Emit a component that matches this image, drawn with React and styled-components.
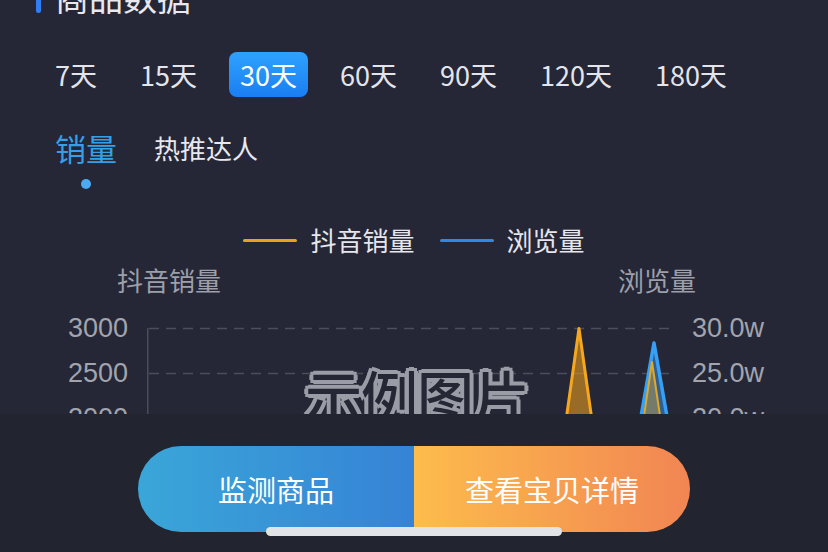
import React from "react";
import styled, { createGlobalStyle } from "styled-components";

const Global = createGlobalStyle`
  html, body { margin: 0; padding: 0; background: #252736; }
  body { font-family: "Noto Sans CJK SC", "Noto Sans", sans-serif; }
  * { box-sizing: border-box; }
`;

const Page = styled.div`
  width: 828px;
  height: 552px;
  display: flex;
  flex-direction: column;
  background: #252736;
  position: relative;
  overflow: hidden;
`;

const Content = styled.div`
  height: 414px;
  overflow: hidden;
  display: flex;
  flex-direction: column;
`;

const TitleRow = styled.div`
  margin-top: -23px;
  height: 40px;
  padding-left: 36px;
  display: flex;
  align-items: center;
  gap: 14px;
`;

const TitleBar = styled.span`
  width: 5px;
  height: 32px;
  border-radius: 3px;
  background: #2f7ef6;
`;

const Title = styled.span`
  font-size: 34px;
  line-height: 40px;
  color: #e8e8ee;
`;

const Periods = styled.div`
  margin-top: 35px;
  padding-left: 44px;
  display: flex;
  gap: 21px;
`;

const Period = styled.div`
  height: 45px;
  padding: 0 11px;
  font-size: 27px;
  line-height: 45px;
  border-radius: 8px;
  color: ${(p) => (p.$active ? "#ffffff" : "#e4e5ea")};
  background: ${(p) =>
    p.$active ? "linear-gradient(180deg, #2ea2ff 0%, #1a7ef2 100%)" : "transparent"};
`;

const SubTabs = styled.div`
  margin-top: 31px;
  padding-left: 55px;
  display: flex;
  gap: 37px;
  align-items: flex-start;
`;

const SubTab = styled.div`
  display: flex;
  flex-direction: column;
  align-items: center;
  gap: 11px;
`;

const SubTabLabel = styled.span`
  height: 40px;
  line-height: 40px;
  font-size: ${(p) => (p.$active ? "31px" : "26px")};
  color: ${(p) => (p.$active ? "#33a0e8" : "#e8e8ee")};
`;

const Dot = styled.span`
  width: 10px;
  height: 10px;
  border-radius: 50%;
  background: #4aaaf2;
`;

const Legend = styled.div`
  margin-top: 33px;
  height: 36px;
  display: flex;
  justify-content: center;
  gap: 25px;
`;

const LegendItem = styled.div`
  display: flex;
  align-items: center;
  gap: 13px;
  font-size: 26px;
  line-height: 36px;
  color: #e6e6ec;
`;

const LegendLine = styled.span`
  width: 54px;
  height: 3px;
  border-radius: 2px;
  background: ${(p) => p.$color};
`;

const AxisNames = styled.div`
  margin-top: 5px;
  height: 34px;
  display: flex;
  justify-content: space-between;
  padding: 0 132px 0 117px;
  font-size: 26px;
  line-height: 34px;
  color: #9d9fa9;
`;

const Chart = styled.div`
  margin-top: 9px;
  position: relative;
  display: flex;
`;

const AxisCol = styled.div`
  width: ${(p) => p.$w}px;
  display: flex;
  flex-direction: column;
  text-align: ${(p) => p.$align};
  font-size: 27px;
  line-height: 45px;
  color: #a2a4ae;
  font-family: "Liberation Sans", "Noto Sans CJK SC", sans-serif;
`;

const Plot = styled.svg`
  display: block;
  margin: 0 20px 0 19px;
  flex: none;
`;

const Watermark = styled.div`
  position: absolute;
  left: 305px;
  top: 60px;
  font-size: 57px;
  line-height: 1;
  font-weight: 500;
  letter-spacing: -1px;
  color: #252735;
  text-shadow: 4px 0 0 #9a9ca6, -4px 0 0 #9a9ca6, 0 4px 0 #9a9ca6, 0 -4px 0 #9a9ca6,
    3px 3px 0 #9a9ca6, -3px -3px 0 #9a9ca6, 3px -3px 0 #9a9ca6, -3px 3px 0 #9a9ca6,
    2px 0 0 #9a9ca6, -2px 0 0 #9a9ca6, 0 2px 0 #9a9ca6, 0 -2px 0 #9a9ca6;
`;

const Footer = styled.div`
  flex: 1;
  background: #22242f;
  display: flex;
  justify-content: center;
  padding-top: 32px;
`;

const ButtonGroup = styled.div`
  width: 552px;
  height: 86px;
  border-radius: 43px;
  overflow: hidden;
  display: flex;
`;

const ActionButton = styled.button`
  flex: 1;
  border: none;
  margin: 0;
  padding: 0;
  font-family: "Noto Sans CJK SC", sans-serif;
  font-size: 29px;
  color: #ffffff;
  background: ${(p) => p.$bg};
`;

const HomeIndicator = styled.div`
  position: absolute;
  left: 266px;
  bottom: 16px;
  width: 296px;
  height: 9px;
  border-radius: 5px;
  background: #e2e3e6;
`;

const periods = ["7天", "15天", "30天", "60天", "90天", "120天", "180天"];

export default function App() {
  return (
    <>
      <Global />
      <Page>
        <Content>
          <TitleRow>
            <TitleBar />
            <Title>商品数据</Title>
          </TitleRow>
          <Periods>
            {periods.map((p) => (
              <Period key={p} $active={p === "30天"}>
                {p}
              </Period>
            ))}
          </Periods>
          <SubTabs>
            <SubTab>
              <SubTabLabel $active>销量</SubTabLabel>
              <Dot />
            </SubTab>
            <SubTab>
              <SubTabLabel>热推达人</SubTabLabel>
            </SubTab>
          </SubTabs>
          <Legend>
            <LegendItem>
              <LegendLine $color="#e8a21c" />
              抖音销量
            </LegendItem>
            <LegendItem>
              <LegendLine $color="#2f88e6" />
              浏览量
            </LegendItem>
          </Legend>
          <AxisNames>
            <span>抖音销量</span>
            <span>浏览量</span>
          </AxisNames>
          <Chart>
            <AxisCol $w={128} $align="right">
              <span>3000</span>
              <span>2500</span>
              <span>2000</span>
            </AxisCol>
            <Plot width="525" height="140" viewBox="0 0 525 140">
              <g stroke="#4a4d5d" strokeWidth="1.5" strokeDasharray="10 7">
                <line x1="2" y1="22.5" x2="525" y2="22.5" />
                <line x1="2" y1="67.5" x2="525" y2="67.5" />
                <line x1="2" y1="112.5" x2="525" y2="112.5" />
              </g>
              <line x1="0.75" y1="22" x2="0.75" y2="140" stroke="#4a4d5d" strokeWidth="1.5" />
              <polygon
                points="414,150 432,22.5 450,150"
                fill="rgba(222,150,30,0.62)"
                stroke="#f5a81e"
                strokeWidth="3"
                strokeLinejoin="round"
              />
              <polygon
                points="487,150 507,37 527,150"
                fill="rgba(60,140,220,0.55)"
                stroke="#35a0f5"
                strokeWidth="3.5"
                strokeLinejoin="round"
              />
              <polygon
                points="491,150 505,56 519,150"
                fill="rgba(200,160,60,0.45)"
                stroke="#e0a82a"
                strokeWidth="2"
                strokeLinejoin="round"
              />
            </Plot>
            <AxisCol $w={120} $align="left">
              <span>30.0w</span>
              <span>25.0w</span>
              <span>20.0w</span>
            </AxisCol>
            <Watermark>示例图片</Watermark>
          </Chart>
        </Content>
        <Footer>
          <ButtonGroup>
            <ActionButton $bg="linear-gradient(90deg, #3aa6d8 0%, #3683d6 100%)">
              监测商品
            </ActionButton>
            <ActionButton $bg="linear-gradient(90deg, #fdbc4c 0%, #f18553 100%)">
              查看宝贝详情
            </ActionButton>
          </ButtonGroup>
        </Footer>
        <HomeIndicator />
      </Page>
    </>
  );
}
